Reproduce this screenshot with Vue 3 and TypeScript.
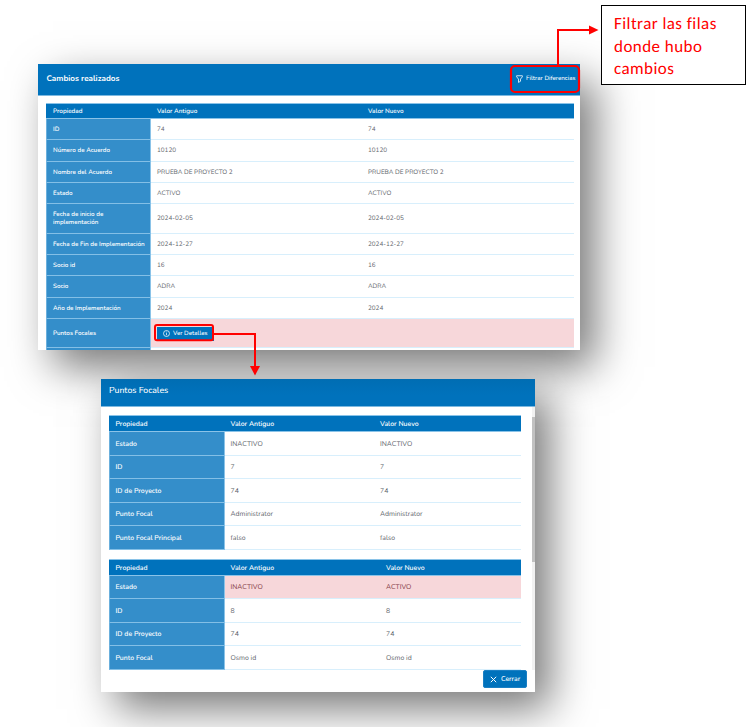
<script setup lang="ts">
interface Row {
  label: string
  before?: string
  after?: string
  height: number
  changed?: boolean
  action?: string
}

const agreementRows: Row[] = [
  { label: 'ID', before: '74', after: '74', height: 21 },
  { label: 'Número de Acuerdo', before: '10120', after: '10120', height: 22 },
  { label: 'Nombre del Acuerdo', before: 'PRUEBA DE PROYECTO 2', after: 'PRUEBA DE PROYECTO 2', height: 21 },
  { label: 'Estado', before: 'ACTIVO', after: 'ACTIVO', height: 21 },
  { label: 'Fecha de inicio de implementación', before: '2024-02-05', after: '2024-02-05', height: 30 },
  { label: 'Fecha de Fin de Implementación', before: '2024-12-27', after: '2024-12-27', height: 21 },
  { label: 'Socio id', before: '16', after: '16', height: 21 },
  { label: 'Socio', before: 'ADRA', after: 'ADRA', height: 22 },
  { label: 'Año de Implementación', before: '2024', after: '2024', height: 21 },
  { label: 'Puntos Focales', height: 29, changed: true, action: 'Ver Detalles' },
  { label: '', height: 21 },
]

const focalTables: { id: string; rows: Row[] }[] = [
  {
    id: 'first',
    rows: [
      { label: 'Estado', before: 'INACTIVO', after: 'INACTIVO', height: 24 },
      { label: 'ID', before: '7', after: '7', height: 23 },
      { label: 'ID de Proyecto', before: '74', after: '74', height: 24 },
      { label: 'Punto Focal', before: 'Administrator', after: 'Administrator', height: 23 },
      { label: 'Punto Focal Principal', before: 'falso', after: 'falso', height: 24 },
    ],
  },
  {
    id: 'second',
    rows: [
      { label: 'Estado', before: 'INACTIVO', after: 'ACTIVO', height: 23, changed: true },
      { label: 'ID', before: '8', after: '8', height: 24 },
      { label: 'ID de Proyecto', before: '74', after: '74', height: 23 },
      { label: 'Punto Focal', before: 'Osmo id', after: 'Osmo id', height: 24 },
    ],
  },
]
</script>

<template>
  <main class="canvas">
    <section class="dialog changes">
      <header class="bar">
        <h1>Cambios realizados</h1>
        <button class="filter">
          <svg width="7" height="8" viewBox="0 0 14 16" fill="none" stroke="#fff" stroke-width="1.6" stroke-linejoin="round">
            <path d="M1.2 1.5h11.6v2L9 8.2v4.3l-4 2.3V8.2L1.2 3.5z" />
          </svg>
          <span>Filtrar Diferencias</span>
        </button>
      </header>
      <div class="grid">
        <div class="row head">
          <span class="cell">Propiedad</span><span class="cell">Valor Antiguo</span><span class="cell">Valor Nuevo</span>
        </div>
        <div v-for="row in agreementRows" :key="row.label" class="row" :class="{ changed: row.changed }" :style="{ height: row.height + 'px' }">
          <span class="cell label">{{ row.label }}</span>
          <span class="cell">
            <button v-if="row.action" class="details">
              <svg width="7" height="7" viewBox="0 0 14 14" fill="none" stroke="#fff" stroke-width="1.5">
                <circle cx="7" cy="7" r="6" />
                <path d="M7 6.2v4.3M7 3.3v1.5" />
              </svg>
              <span>{{ row.action }}</span>
            </button>
            <template v-else>{{ row.before }}</template>
          </span>
          <span class="cell">{{ row.after }}</span>
        </div>
      </div>
    </section>

    <section class="dialog focal">
      <header class="bar"><h2>Puntos Focales</h2></header>
      <div class="scroll">
        <div class="tables">
          <div v-for="table in focalTables" :key="table.id" class="grid" :class="table.id">
            <div class="row head">
              <span class="cell">Propiedad</span><span class="cell">Valor Antiguo</span><span class="cell">Valor Nuevo</span>
            </div>
            <div v-for="row in table.rows" :key="row.label" class="row" :class="{ changed: row.changed }" :style="{ height: row.height + 'px' }">
              <span class="cell label">{{ row.label }}</span>
              <span class="cell">{{ row.before }}</span>
              <span class="cell">{{ row.after }}</span>
            </div>
          </div>
        </div>
        <div class="track"><div class="thumb"></div></div>
      </div>
      <footer>
        <button class="close">
          <svg width="7" height="7" viewBox="0 0 7 7" stroke="#fff" stroke-width="1"><path d="M.8.8l5.4 5.4M6.2.8L.8 6.2" /></svg>
          <span>Cerrar</span>
        </button>
      </footer>
    </section>

    <aside class="note">Filtrar las filas<br />donde hubo<br />cambios</aside>

    <svg class="arrows" width="755" height="727" viewBox="0 0 755 727" fill="none" stroke="#f00" stroke-width="2">
      <rect x="511" y="66" width="68" height="26" rx="4" stroke-width="2.2" />
      <path d="M558 66V30H590" />
      <path d="M589 25.5L598.5 30 589 34.5z" fill="#f00" stroke="none" />
      <rect x="155" y="325" width="58" height="15.2" rx="2" />
      <path d="M213 334H255V367" />
      <path d="M250 366h10l-5 9.5z" fill="#f00" stroke="none" />
    </svg>
  </main>
</template>

<style>
body {
  margin: 0;
  background: #fff;
}
</style>

<style scoped>
.canvas {
  position: relative;
  width: 755px;
  height: 727px;
  overflow: hidden;
  background: #fff;
  font-family: Nunito, 'Open Sans', 'Noto Sans', sans-serif;
  text-rendering: geometricPrecision;
}
.dialog {
  position: absolute;
  display: flex;
  flex-direction: column;
  box-sizing: border-box;
  background: #fff;
  box-shadow: 15px 17px 40px rgba(0, 0, 0, 0.53);
}
.changes {
  left: 38px;
  top: 64px;
  width: 542px;
  height: 286px;
}
.focal {
  left: 101px;
  top: 379px;
  width: 434px;
  height: 313px;
  clip-path: inset(-29px -120px -120px -120px);
}
.bar {
  display: flex;
  flex: none;
  align-items: center;
  justify-content: space-between;
  box-sizing: border-box;
  background: #0072bc;
  border-bottom: 1px solid #7db9e0;
  color: #fff;
}
.changes .bar {
  height: 32px;
  padding: 0 4.5px 2px 8.5px;
}
.focal .bar {
  height: 28px;
  padding: 0 8px 4px;
  background: linear-gradient(#006db3, #0072bc 60%);
}
h1,
h2 {
  margin: 0;
  font-size: 8.1px;
  line-height: 12px;
  font-weight: 700;
  white-space: nowrap;
}
h2 {
  font-size: 8.7px;
  font-weight: 500;
}
button {
  display: flex;
  align-items: center;
  box-sizing: border-box;
  border: 0;
  padding: 0;
  background: #0072bc;
  color: #fff;
  font-family: inherit;
  font-size: 6.2px;
  font-weight: 500;
  white-space: nowrap;
  text-rendering: inherit;
}
.filter {
  gap: 2.5px;
}
.grid {
  flex: none;
  font-size: 6.35px;
  line-height: 8.4px;
  color: #5f666d;
}
.changes .grid {
  width: 528px;
  height: 247px;
  margin: 7px 0 0 8px;
  overflow: hidden;
}
.row {
  display: grid;
  box-sizing: border-box;
  border-bottom: 1px solid #d8effc;
}
.changes .row {
  grid-template-columns: 105px 211px 1fr;
}
.first .row {
  grid-template-columns: 116px 149.5px 1fr;
}
.second .row {
  grid-template-columns: 116px 155.5px 1fr;
}
.cell {
  display: flex;
  align-items: center;
  padding: 1.6px 6px 0;
}
.label {
  margin-bottom: -1px;
  padding: 1.6px 4px 0 6px;
  border-left: 1px solid #6bb0dd;
  border-right: 1px solid #8ac3e8;
  border-bottom: 1px solid #83bfe6;
  background: #348eca;
  color: #fff;
  font-weight: 600;
}
.changes .label {
  font-size: 6.25px;
}
.row.head {
  height: 16px;
  border-top: 1px solid #8ac3e8;
  border-bottom-color: #8ac3e8;
  background: #0072bc;
  color: #fff;
  font-weight: 600;
}
.head .cell:first-child {
  padding-left: 7px;
}
.changed {
  background: #f7d7da;
  color: #843c46;
}
.details {
  height: 14px;
  padding: 0 6px;
  gap: 3px;
}
.scroll {
  display: flex;
  flex: none;
  justify-content: space-between;
  height: 263px;
}
.tables {
  display: flex;
  flex-direction: column;
  gap: 9px;
  width: 412.5px;
  padding: 8px 0 0 7.5px;
}
.focal .grid {
  font-size: 6.9px;
}
.focal .cell {
  padding-top: 2.6px;
}
.focal .head {
  height: 17px;
}
.track {
  width: 3px;
  padding-top: 10px;
  box-sizing: border-box;
  background: #f1f1f1;
}
.thumb {
  height: 145px;
  background: #c1c1c1;
}
footer {
  display: flex;
  justify-content: flex-end;
  padding-right: 8px;
}
.close {
  height: 18px;
  width: 44px;
  padding: 0 0 0 6px;
  gap: 4px;
  border: 1px solid #1c80c4;
  border-radius: 2px;
  font-size: 6.9px;
}
.note {
  position: absolute;
  left: 601px;
  top: 5px;
  box-sizing: border-box;
  width: 145px;
  height: 80px;
  padding: 7px 0 0 12px;
  border: 1px solid #000;
  background: #fff;
  color: #f00;
  font-family: Calibri, Carlito, Lato, sans-serif;
  font-size: 17px;
  letter-spacing: 0.45px;
  line-height: 22.6px;
  font-variant-ligatures: none;
  white-space: nowrap;
}
.arrows {
  position: absolute;
  left: 0;
  top: 0;
  pointer-events: none;
}
</style>
